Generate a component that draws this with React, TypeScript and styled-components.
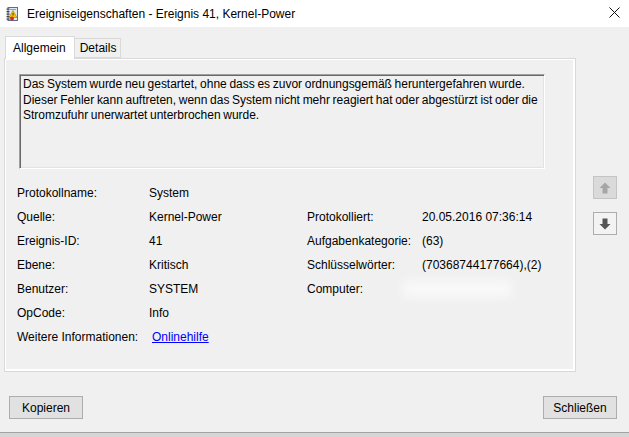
import React, { FC } from 'react';
import styled, { createGlobalStyle } from 'styled-components';

const GlobalStyle = createGlobalStyle`
  html, body {
    margin: 0;
    padding: 0;
    background: #f0f0f0;
  }
  body {
    font-family: 'Liberation Sans', Arial, sans-serif;
    font-size: 12px;
    color: #000;
  }
`;

interface Field {
  label: string;
  value?: string;
  link?: string;
  right?: { label: string; value?: string; redacted?: boolean };
}

const descriptionLines = [
  'Das System wurde neu gestartet, ohne dass es zuvor ordnungsgemäß heruntergefahren wurde.',
  'Dieser Fehler kann auftreten, wenn das System nicht mehr reagiert hat oder abgestürzt ist oder die',
  'Stromzufuhr unerwartet unterbrochen wurde.',
];

const fields: Field[] = [
  { label: 'Protokollname:', value: 'System' },
  {
    label: 'Quelle:',
    value: 'Kernel-Power',
    right: { label: 'Protokolliert:', value: '20.05.2016 07:36:14' },
  },
  {
    label: 'Ereignis-ID:',
    value: '41',
    right: { label: 'Aufgabenkategorie:', value: '(63)' },
  },
  {
    label: 'Ebene:',
    value: 'Kritisch',
    right: { label: 'Schlüsselwörter:', value: '(70368744177664),(2)' },
  },
  {
    label: 'Benutzer:',
    value: 'SYSTEM',
    right: { label: 'Computer:', redacted: true },
  },
  { label: 'OpCode:', value: 'Info' },
  { label: 'Weitere Informationen:', link: 'Onlinehilfe' },
];

const Window = styled.div`
  width: 629px;
  height: 437px;
  display: flex;
  flex-direction: column;
  background: #f0f0f0;
  overflow: hidden;
`;

const TitleBar = styled.div`
  height: 27px;
  flex: none;
  background: #fff;
  display: flex;
  align-items: center;
  padding: 0 9px 0 6px;
`;

const Title = styled.span`
  flex: 1;
  margin-left: 9px;
  font-size: 12px;
  white-space: nowrap;
`;

const CloseGlyph = styled.svg`
  width: 11px;
  height: 11px;
  margin-top: -3px;
`;

const Main = styled.div`
  display: flex;
  padding: 8px 0 0 4px;
`;

const TabArea = styled.div`
  width: 572px;
  display: flex;
  flex-direction: column;
`;

const TabStrip = styled.div`
  height: 23px;
  display: flex;
  align-items: flex-end;
  padding-left: 1px;
`;

const Tab = styled.div<{ $active?: boolean }>`
  position: relative;
  z-index: ${(p) => (p.$active ? 1 : 0)};
  height: ${(p) => (p.$active ? '23px' : '20px')};
  margin-bottom: ${(p) => (p.$active ? '-1px' : '0')};
  padding: ${(p) => (p.$active ? '0 8px 0 7px' : '0 4px 0 5px')};
  display: flex;
  align-items: center;
  background: ${(p) => (p.$active ? '#fff' : '#f0f0f0')};
  border: 1px solid #d9d9d9;
  border-bottom: ${(p) => (p.$active ? 'none' : '1px solid #d9d9d9')};
  border-left: ${(p) => (p.$active ? '1px solid #d9d9d9' : 'none')};
  box-sizing: border-box;
  font-size: 12px;
`;

const Panel = styled.div`
  height: 314px;
  box-sizing: border-box;
  border: 1px solid #d9d9d9;
  box-shadow: inset -2px -2px 0 #fff, inset 1px 1px 0 #fff;
  padding: 15px 0 0 14px;
`;

const Description = styled.div`
  width: 526px;
  height: 95px;
  box-sizing: border-box;
  border: 1px solid;
  border-color: #a0a0a0 #fff #fff #a0a0a0;
  box-shadow: inset 1px 1px 0 #696969, inset -1px -1px 0 #e3e3e3;
  padding: 2px 2px 0 3px;
  line-height: 15.5px;
  word-spacing: -0.6px;
  letter-spacing: -0.02px;
  background: #f0f0f0;
  white-space: nowrap;
`;

const Line = styled.div``;

const FieldGrid = styled.div`
  display: grid;
  grid-template-columns: 132px 158px 115px 1fr;
  grid-auto-rows: 24px;
  align-items: center;
  margin: 12px 0 0 -2px;
  white-space: nowrap;
`;

const Label = styled.span``;

const Value = styled.span``;

const Link = styled.a`
  color: #0000ff;
  text-decoration: underline;
  margin-left: 3px;
  cursor: pointer;
`;

const Redacted = styled.span`
  display: block;
  width: 110px;
  height: 18px;
  margin-left: -20px;
  background: rgba(255, 255, 255, 0.55);
  filter: blur(5px);
`;

const Side = styled.div`
  display: flex;
  flex-direction: column;
  gap: 13px;
  padding: 141px 0 0 17px;
`;

const ArrowButton = styled.div<{ $disabled?: boolean }>`
  width: 24px;
  height: 23px;
  box-sizing: border-box;
  display: flex;
  align-items: center;
  justify-content: center;
  border: 1px solid ${(p) => (p.$disabled ? '#c4c4c4' : '#adadad')};
  background: ${(p) => (p.$disabled ? '#dadada' : '#f3f3f3')};
  color: ${(p) => (p.$disabled ? '#a6a6a6' : '#555')};
`;

const Footer = styled.div`
  display: flex;
  justify-content: space-between;
  padding: 24px 12px 0 9px;
`;

const Button = styled.button`
  width: 74px;
  height: 23px;
  padding: 0;
  background: #e1e1e1;
  border: 1px solid #adadad;
  font-family: 'Liberation Sans', Arial, sans-serif;
  font-size: 12px;
  color: #000;
`;

const Spacer = styled.div`
  flex: 1;
`;

const BottomEdge = styled.div`
  height: 4px;
  flex: none;
  border-top: 1px solid #a3a3a3;
  background: #d6d6d6;
`;

const EventIcon: FC = () => (
  <svg width="12" height="14" viewBox="0 0 12 14">
    <rect x="2" y="0.5" width="9.5" height="13" fill="#dfe8f5" stroke="#5a6e8c" />
    <rect x="4" y="2" width="6" height="1" fill="#8aa0c0" />
    {[1.5, 4, 6.5, 9, 11.5].map((y) => (
      <rect key={y} x="0.5" y={y} width="3" height="1.2" fill="#444" />
    ))}
    <path d="M7 3.5 L11 10.5 L3 10.5 Z" fill="#f5c400" stroke="#a07800" strokeWidth="0.6" />
    <rect x="6.6" y="6" width="0.9" height="2.6" fill="#333" />
    <circle cx="6" cy="11.5" r="2" fill="#d32a2a" />
  </svg>
);

const Arrow: FC<{ down?: boolean }> = ({ down }) => (
  <svg width="12" height="12" viewBox="0 0 12 12" style={down ? { transform: 'rotate(180deg)' } : undefined}>
    <path d="M6 0.5 L11.5 6 L8.5 6 L8.5 11.5 L3.5 11.5 L3.5 6 L0.5 6 Z" fill="currentColor" />
  </svg>
);

const App: FC = () => (
  <>
    <GlobalStyle />
    <Window>
      <TitleBar>
        <EventIcon />
        <Title>Ereigniseigenschaften - Ereignis 41, Kernel-Power</Title>
        <CloseGlyph viewBox="0 0 11 11">
          <path d="M0.5 0.5 L10.5 10.5 M10.5 0.5 L0.5 10.5" stroke="#111" strokeWidth="1" />
        </CloseGlyph>
      </TitleBar>
      <Main>
        <TabArea>
          <TabStrip>
            <Tab $active>Allgemein</Tab>
            <Tab>Details</Tab>
          </TabStrip>
          <Panel>
            <Description>
              {descriptionLines.map((line) => (
                <Line key={line}>{line}</Line>
              ))}
            </Description>
            <FieldGrid>
              {fields.map((f) => (
                <React.Fragment key={f.label}>
                  <Label>{f.label}</Label>
                  {f.link ? <Link>{f.link}</Link> : <Value>{f.value}</Value>}
                  <Label>{f.right?.label}</Label>
                  {f.right?.redacted ? <Redacted /> : <Value>{f.right?.value}</Value>}
                </React.Fragment>
              ))}
            </FieldGrid>
          </Panel>
        </TabArea>
        <Side>
          <ArrowButton $disabled>
            <Arrow />
          </ArrowButton>
          <ArrowButton>
            <Arrow down />
          </ArrowButton>
        </Side>
      </Main>
      <Footer>
        <Button>Kopieren</Button>
        <Button>Schließen</Button>
      </Footer>
      <Spacer />
      <BottomEdge />
    </Window>
  </>
);

export default App;
